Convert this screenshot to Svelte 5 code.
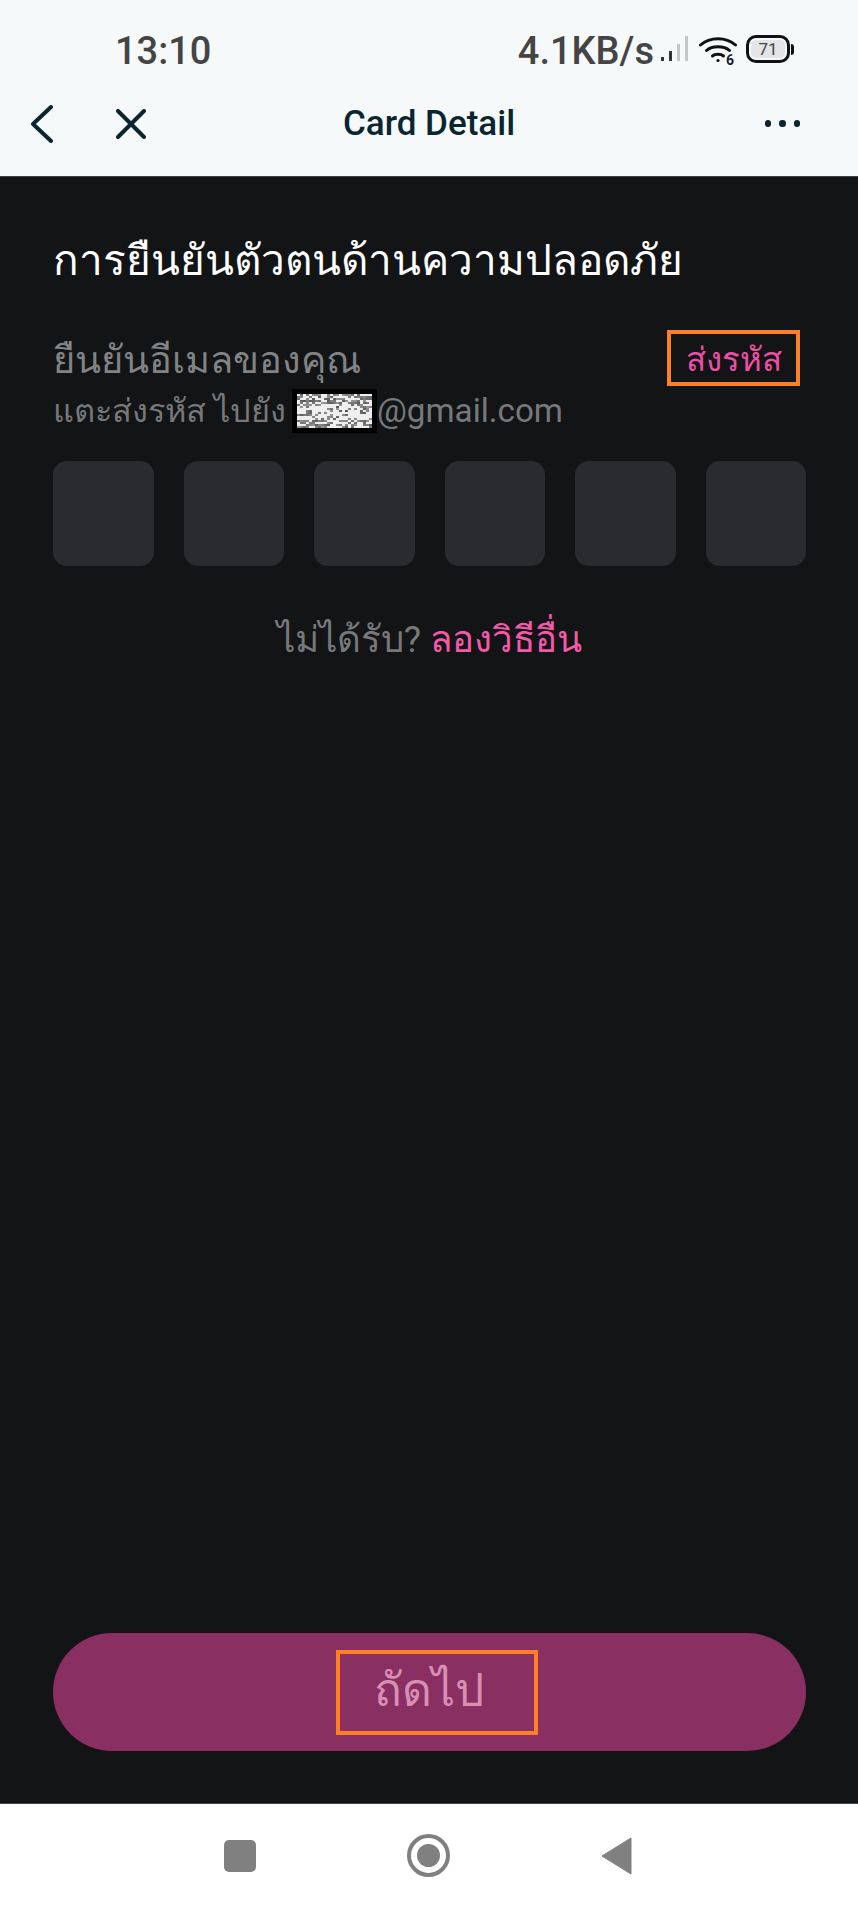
<script>
  const boxes = [0, 1, 2, 3, 4, 5];

  // scrambled block that covers the address
  let seed = 7;
  const rnd = () => (seed = (seed * 16807) % 2147483647) / 2147483647;
  const noise = [];
  for (let y = 0; y < 34; y += 2) {
    for (let x = 0; x < 75; x += 3) {
      const band = y > 10 && y < 26 ? 0.74 : 0.46;
      const v = rnd() < band ? 238 : 90 + Math.floor(rnd() * 60);
      noise.push({ x, y, c: `rgb(${v},${v},${v})` });
    }
  }
</script>

<div class="page">
  <header class="top">
    <div class="status">
      <span class="time">13:10</span>
      <span class="right">
        <span class="speed">4.1KB/s</span>
        <svg class="signal" width="30" height="28" viewBox="0 0 30 28">
          <rect x="1" y="22" width="3" height="4" fill="#333" />
          <rect x="9" y="16" width="3" height="10" fill="#333" />
          <rect x="17" y="9" width="3" height="17" fill="#c4c7c8" />
          <rect x="25" y="1" width="3" height="25" fill="#c4c7c8" />
        </svg>
        <svg class="wifi" width="38" height="36" viewBox="0 0 38 36" fill="none" stroke="#111" stroke-width="3" stroke-linecap="round">
          <path d="M1.5 10 C11 1.5 27 1.5 36.5 10" />
          <path d="M7.5 15.5 C13 10.5 25 10.5 30.5 15.5" />
          <path d="M13.5 21 C16 18.8 22 18.8 24.5 21" />
          <circle cx="19" cy="25.5" r="1.6" fill="#111" stroke="none" />
          <text x="27" y="30" class="wifi-six">6</text>
        </svg>
        <span class="battery"><span class="level">71</span></span>
        <span class="nub"></span>
      </span>
    </div>
    <nav class="bar">
      <div class="nav-left">
        <svg width="24" height="38" viewBox="0 0 24 38" fill="none" stroke="#0a2530" stroke-width="4" stroke-linecap="round" stroke-linejoin="round">
          <path d="M21 2 L3 19 L21 36" />
        </svg>
        <svg width="30" height="30" viewBox="0 0 30 30" fill="none" stroke="#0a2530" stroke-width="4" stroke-linecap="round">
          <path d="M2 2 L28 28 M28 2 L2 28" />
        </svg>
      </div>
      <h1>Card Detail</h1>
      <div class="dots"><i></i><i></i><i></i></div>
    </nav>
  </header>

  <main>
    <h2>การยืนยันตัวตนด้านความปลอดภัย</h2>
    <div class="verify">
      <div class="verify-text">
        <div class="label">ยืนยันอีเมลของคุณ</div>
        <div class="hint">
          <span>แตะส่งรหัส ไปยัง</span>
          <svg class="mask" width="85" height="44" viewBox="0 0 85 44">
            <rect width="85" height="44" fill="#000" />
            <g transform="translate(5 5)">
              {#each noise as n}
                <rect x={n.x} y={n.y} width="3" height="2" fill={n.c} />
              {/each}
            </g>
          </svg>
          <span class="mail">@gmail.com</span>
        </div>
      </div>
      <div class="send">ส่งรหัส</div>
    </div>

    <div class="otp">
      {#each boxes as b (b)}
        <div class="cell"></div>
      {/each}
    </div>

    <p class="other">ไม่ได้รับ? <span>ลองวิธีอื่น</span></p>

    <button class="next"><span>ถัดไป</span></button>
  </main>

  <footer>
    <div class="sq"></div>
    <div class="ring"><div class="dot"></div></div>
    <svg width="32" height="38" viewBox="0 0 32 38"><path d="M30 1 L30 37 L1 19 Z" fill="#808080" stroke="#808080" stroke-width="1" stroke-linejoin="round" /></svg>
  </footer>
</div>

<style>
  :global(body) {
    margin: 0;
    background: #131416;
  }
  .page {
    width: 858px;
    height: 1907px;
    display: flex;
    flex-direction: column;
    font-family: Roboto, "Noto Sans", sans-serif;
  }
  .top {
    height: 177px;
    background: #f5f9fa;
    flex: none;
    border-bottom: 1px solid #444;
    box-sizing: border-box;
  }
  .status {
    display: flex;
    justify-content: space-between;
    align-items: center;
    padding: 28px 64px 0 115px;
    height: 46px;
    color: #444;
    font-size: 38px;
    font-weight: 500;
    line-height: 46px;
  }
  .right {
    display: flex;
    align-items: center;
    gap: 7px;
  }
  .speed {
    margin-right: -1px;
  }
  .signal {
    margin-top: -4px;
  }
  .wifi {
    margin-left: 2px;
    margin-right: 2px;
    margin-top: 3px;
  }
  .wifi-six {
    font-size: 14px;
    font-weight: 700;
    fill: #222;
    stroke: none;
    font-family: Roboto, sans-serif;
  }
  .battery {
    width: 44px;
    height: 28px;
    border: 3px solid #111;
    border-radius: 10px;
    box-sizing: border-box;
    display: flex;
    padding: 2px;
    margin-top: -4px;
  }
  .level {
    flex: 1;
    background: #e3e5e6;
    border-radius: 5px;
    font-size: 17px;
    font-weight: 400;
    line-height: 18px;
    text-align: center;
    color: #444;
  }
  .nub {
    width: 3px;
    height: 11px;
    background: #111;
    border-radius: 0 3px 3px 0;
    margin-left: -6px;
    margin-top: -4px;
  }
  .bar {
    display: grid;
    grid-template-columns: 1fr auto 1fr;
    align-items: center;
    padding: 24px 30px 0 30px;
    height: 52px;
  }
  .nav-left {
    display: flex;
    align-items: center;
    gap: 62px;
  }
  h1 {
    margin: 0;
    font-size: 35px;
    font-weight: 500;
    color: #0a2530;
    line-height: 52px;
  }
  .dots {
    display: flex;
    justify-content: flex-end;
    gap: 8px;
    padding-right: 28px;
    margin-top: -1px;
  }
  .dots i {
    width: 6.5px;
    height: 6.5px;
    border-radius: 50%;
    background: #0a2530;
  }
  main {
    flex: 1;
    display: flex;
    flex-direction: column;
    padding: 59px 52px 52px 53px;
    background: #131416;
    min-height: 0;
  }
  h2 {
    margin: 0;
    font-size: 42.3px;
    line-height: 50px;
    font-weight: 400;
    color: #fff;
  }
  .verify {
    display: flex;
    justify-content: space-between;
    align-items: flex-start;
    margin-top: 44px;
  }
  .label {
    font-size: 38px;
    line-height: 46px;
    color: #828385;
    padding-top: 7px;
  }
  .hint {
    display: flex;
    align-items: center;
    gap: 6px;
    font-size: 32.5px;
    line-height: 44px;
    color: #77787a;
    margin-top: 6px;
  }
  .mask {
    flex: none;
  }
  .mail {
    margin-left: -6px;
    font-size: 33.2px;
  }
  .send {
    border: 4.5px solid #ff7f27;
    width: 133px;
    height: 56px;
    box-sizing: border-box;
    margin-right: 6px;
    text-align: center;
    color: #ee4fa4;
    font-size: 33px;
    line-height: 52px;
  }
  .otp {
    display: flex;
    gap: 30px;
    margin-top: 28px;
  }
  .cell {
    flex: 1;
    height: 105px;
    background: #2a2b2f;
    border-radius: 14px;
  }
  .other {
    margin: 49px 0 0;
    text-align: center;
    font-size: 36.7px;
    line-height: 50px;
    color: #77787a;
  }
  .other span {
    color: #f25aa9;
  }
  .next {
    margin-top: auto;
    height: 118px;
    border: 0;
    border-radius: 59px;
    background: #8a2f61;
    display: flex;
    align-items: center;
    justify-content: center;
    font-family: inherit;
    padding: 0 0 0 15px;
  }
  .next span {
    width: 202px;
    height: 85px;
    box-sizing: border-box;
    border: 4.5px solid #ff7f27;
    color: #d88fb6;
    font-size: 46px;
    line-height: 72px;
    text-align: left;
    padding-left: 34px;
  }
  footer {
    flex: none;
    height: 104px;
    background: #fff;
    display: flex;
    align-items: center;
    box-sizing: border-box;
    padding: 0 0 0 224px;
    gap: 151px;
    border-top: 1px solid #444;
  }
  .sq {
    width: 32px;
    height: 32px;
    background: #808080;
    border-radius: 5px;
  }
  .ring {
    width: 43px;
    height: 43px;
    border: 4px solid #808080;
    border-radius: 50%;
    box-sizing: border-box;
    display: flex;
    align-items: center;
    justify-content: center;
  }
  .dot {
    width: 23px;
    height: 23px;
    background: #808080;
    border-radius: 50%;
  }
</style>
